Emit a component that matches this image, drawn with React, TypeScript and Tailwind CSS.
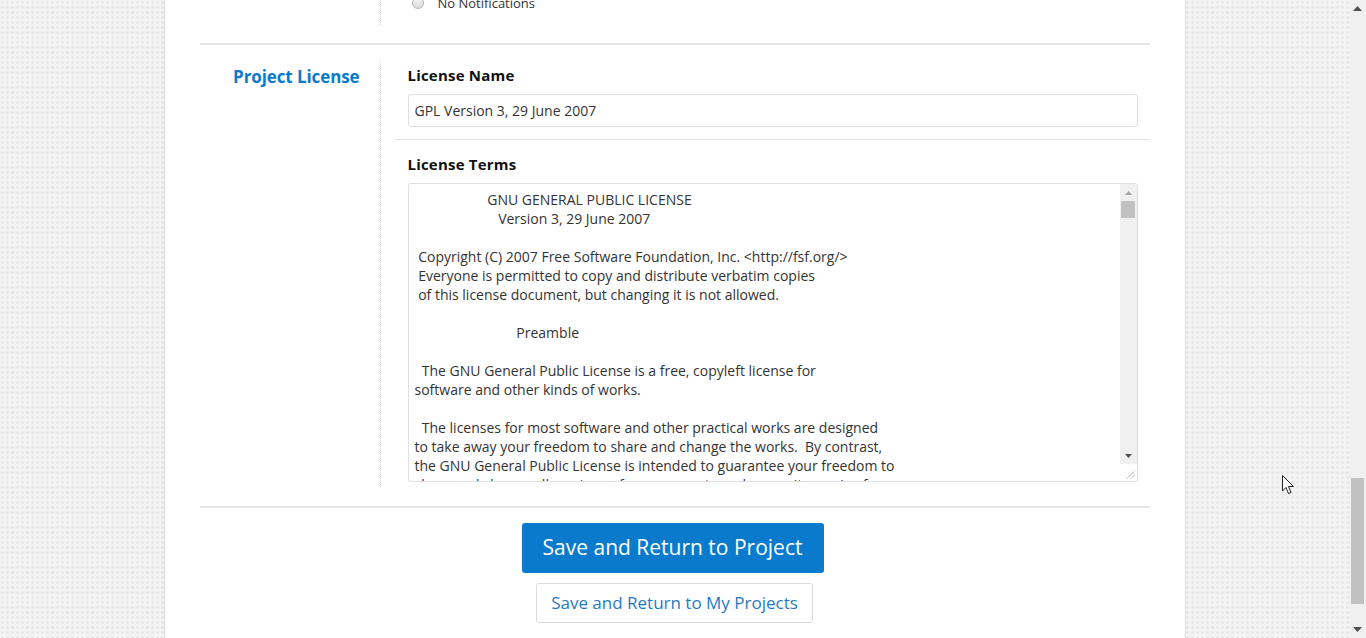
import React from 'react';

const GPL_TEXT = `                    GNU GENERAL PUBLIC LICENSE
                       Version 3, 29 June 2007

 Copyright (C) 2007 Free Software Foundation, Inc. <http://fsf.org/>
 Everyone is permitted to copy and distribute verbatim copies
 of this license document, but changing it is not allowed.

                            Preamble

  The GNU General Public License is a free, copyleft license for
software and other kinds of works.

  The licenses for most software and other practical works are designed
to take away your freedom to share and change the works.  By contrast,
the GNU General Public License is intended to guarantee your freedom to
share and change all versions of a program--to make sure it remains free
software for all its users.  We, the Free Software Foundation, use the
GNU General Public License for most of our software; it applies also to
any other work released this way by its authors.  You can apply it to
your programs, too.

  When we speak of free software, we are referring to freedom, not
price.  Our General Public Licenses are designed to make sure that you
have the freedom to distribute copies of free software (and charge for
them if you wish), that you receive source code or can get it if you
want it, that you can change the software or use pieces of it in new
free programs, and that you know you can do these things.`;

const ArrowUp = ({ color }: { color: string }) => (
  <svg width="7" height="4" viewBox="0 0 7 4"><path d="M0 4 L3.5 0 L7 4 Z" fill={color} /></svg>
);

const ArrowDown = ({ color }: { color: string }) => (
  <svg width="7" height="4" viewBox="0 0 7 4"><path d="M0 0 L7 0 L3.5 4 Z" fill={color} /></svg>
);

// fake page scrollbar, scrolled to the bottom
const PageScrollbar = () => (
  <div className="w-[17px] shrink-0 bg-[#f0f0f0] flex flex-col items-center">
    <div className="h-[17px] flex items-center justify-center">
      <svg width="9" height="5" viewBox="0 0 9 5"><path d="M0 5 L4.5 0 L9 5 Z" fill="#505050" /></svg>
    </div>
    <div className="flex-1" />
    <div className="w-[13px] h-[126px] bg-[#c1c1c1]" />
    <div className="h-[17px] mt-[17px] flex items-center justify-center">
      <svg width="9" height="5" viewBox="0 0 9 5"><path d="M0 0 L9 0 L4.5 5 Z" fill="#505050" /></svg>
    </div>
  </div>
);

// textarea scrollbar + resize grip
const TextareaScrollbar = () => (
  <div className="w-[17px] shrink-0 flex flex-col">
    <div className="flex-1 bg-[#f0f0f0] flex flex-col items-center">
      <div className="h-[17px] flex items-center justify-center">
        <ArrowUp color="#a3a3a3" />
      </div>
      <div className="w-[14px] h-[17px] bg-[#c1c1c1]" />
      <div className="flex-1" />
      <div className="h-[17px] flex items-center justify-center">
        <ArrowDown color="#505050" />
      </div>
    </div>
    <div className="h-[17px] bg-white flex items-end justify-end p-[2px]">
      <svg width="9" height="9" viewBox="0 0 9 9">
        <path d="M1 8.5 L8.5 1 M5 8.5 L8.5 5" stroke="#6d6d6d" strokeWidth="1" strokeDasharray="1 1" />
      </svg>
    </div>
  </div>
);

export default function App() {
  return (
    <div className="relative h-screen overflow-hidden flex font-['Open_Sans',sans-serif] text-[#333]">
      <div className="flex-1 bg-[#f3f3f3] bg-[radial-gradient(#e6e6e6_1px,transparent_1.5px)] bg-[size:5px_5px]">
        <div className="mx-auto w-[1022px] h-full bg-white border-x border-[#dddddd] px-[35px]">
          {/* previous section, mostly scrolled away */}
          <div className="flex h-[25px]">
            <div className="w-[180px] shrink-0" />
            <div className="border-l border-dotted border-[#cfcfcf] pl-[31px]">
              <label className="-mt-[6px] flex items-center gap-[14px] text-[13px] leading-[18px]">
                <span className="w-[12px] h-[12px] rounded-full border border-[#b5b5b5] bg-gradient-to-b from-[#f4f4f4] to-[#dcdcdc]" />
                No Notifications
              </label>
            </div>
          </div>

          <div className="h-[2px] bg-[#e5e5e5] mt-[18px] mb-[17px]" />

          <div className="flex">
            <div className="w-[180px] shrink-0 pr-[20px] pt-[3px] text-right">
              <h2 className="text-[17px] leading-[24px] font-bold text-[#0a7acc] tracking-[-0.1px]">Project License</h2>
            </div>
            <div className="flex-1 border-l border-dotted border-[#cfcfcf]">
              <div className="ml-[14px]">
                <div className="pl-[13px] pr-[12px] pt-[3px] pb-[12px]">
                  <div className="text-[15px] leading-[20px] font-bold text-[#111] tracking-[0.2px] mb-[9px]">License Name</div>
                  <input
                    type="text"
                    defaultValue="GPL Version 3, 29 June 2007"
                    className="block w-full h-[33px] border border-[#e0e0e0] rounded-[3px] px-[6px] text-[14px] text-[#333] outline-none"
                  />
                </div>
                <div className="h-px bg-[#e5e5e5]" />
                <div className="pl-[13px] pr-[12px] pt-[14px] pb-[5px]">
                  <div className="text-[15px] leading-[20px] font-bold text-[#111] tracking-[0.2px] mb-[9px]">License Terms</div>
                  <div className="flex h-[299px] border border-[#e0e0e0] rounded-[3px] overflow-hidden">
                    <textarea
                      defaultValue={GPL_TEXT}
                      className="flex-1 h-full resize-none overflow-hidden px-[6px] pt-[6px] text-[14px] leading-[19px] text-[#333] outline-none"
                    />
                    <TextareaScrollbar />
                  </div>
                </div>
              </div>
            </div>
          </div>

          <div className="h-[2px] bg-[#e5e5e5] mt-[19px]" />

          <div className="flex flex-col items-center pt-[15px] gap-[10px]">
            <button className="w-[302px] h-[50px] mr-[4px] rounded-[3px] bg-[#0a7acc] text-white text-[21px]">
              Save and Return to Project
            </button>
            <button className="w-[277px] h-[40px] rounded-[3px] border border-[#dcdcdc] bg-white text-[#1f7ac4] text-[17px]">
              Save and Return to My Projects
            </button>
          </div>
        </div>
      </div>
      <PageScrollbar />

      {/* mouse pointer */}
      <svg className="absolute left-[1282px] top-[475px]" width="13" height="20" viewBox="0 0 13 20">
        <path d="M0.5 0.5 L0.5 16 L4 12.5 L6.5 18.5 L9 17.5 L6.5 11.5 L11.5 11.5 Z" fill="white" stroke="#222" strokeWidth="1" />
      </svg>
    </div>
  );
}
